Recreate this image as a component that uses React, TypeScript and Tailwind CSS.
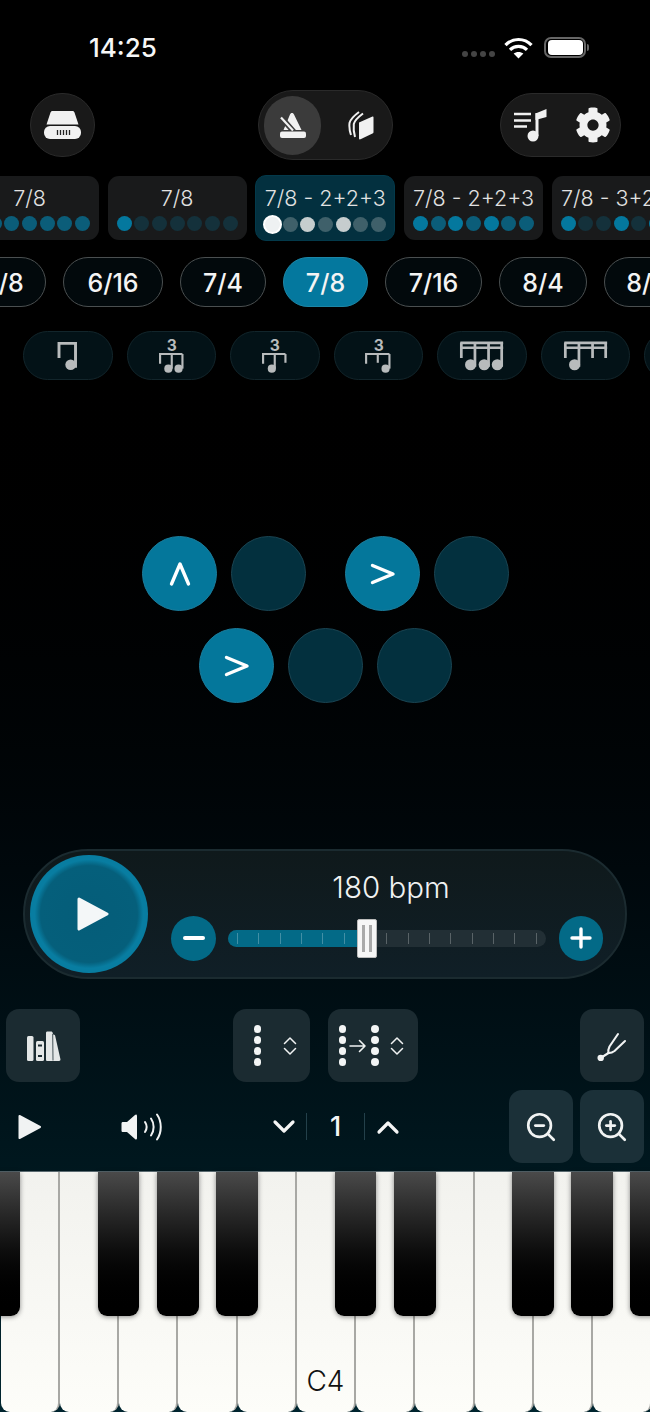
import React from "react";
import { ZoomIn, ZoomOut } from "lucide-react";
import { FaCog } from "react-icons/fa";

const bright = "bg-[#04789e]";
const mid = "bg-[#0b5d79]";
const dark = "bg-[#14313b]";

const cards = [
  { label: "7/8", dots: [mid, mid, mid, mid, mid, mid, mid] },
  { label: "7/8", dots: [bright, dark, dark, dark, dark, dark, dark] },
  { label: "7/8 - 2+2+3", active: true, dots: [] },
  { label: "7/8 - 2+2+3", dots: [bright, mid, bright, mid, bright, mid, mid] },
  { label: "7/8 - 3+2+2", dots: [bright, dark, dark, bright, dark, bright, dark] },
];

const meters = [
  { label: "6/8", w: "w-[85px]" },
  { label: "6/16", w: "w-[100px]" },
  { label: "7/4", w: "w-[86px]" },
  { label: "7/8", w: "w-[85px]", active: true },
  { label: "7/16", w: "w-[97px]" },
  { label: "8/4", w: "w-[88px]" },
  { label: "8/8", w: "w-[85px]" },
];

function NoteSvg({ children }: { children: React.ReactNode }) {
  return (
    <svg width="90" height="49" viewBox="0 0 90 49" fill="#b8bbbc" stroke="#b8bbbc">
      {children}
    </svg>
  );
}

function Triplet({ left, stems, heads, right }: { left: number; right: number; stems: [number, number][]; heads: number[] }) {
  return (
    <NoteSvg>
      <text x="45" y="20" textAnchor="middle" fontFamily="Inter, sans-serif" fontSize="16" fontWeight="700" stroke="none">3</text>
      <path d={`M${left} 33V23H${right}`} fill="none" strokeWidth="2.2" />
      {stems.map(([x, y]) => (
        <path key={x} d={`M${x} 23V${y}`} fill="none" strokeWidth="2.2" />
      ))}
      {heads.map((x) => (
        <circle key={x} cx={x} cy="38" r="4.2" stroke="none" />
      ))}
    </NoteSvg>
  );
}

const noteIcons = [
  <NoteSvg key="a">
    <path d="M36 27V12H53V37" fill="none" strokeWidth="3" />
    <circle cx="48" cy="34" r="5.5" stroke="none" />
  </NoteSvg>,
  <Triplet key="b" left={33} right={56} stems={[[45, 38], [56, 38]]} heads={[41.5, 52]} />,
  <Triplet key="c" left={33} right={56} stems={[[45, 38], [56, 32]]} heads={[42]} />,
  <Triplet key="d" left={32} right={56} stems={[[44, 32], [56, 38]]} heads={[52]} />,
  <NoteSvg key="e">
    <path d="M23 11.5H67M23 16.5H67" fill="none" strokeWidth="2.6" />
    <path d="M24 11V27M38 11V36M52 11V36M65.5 11V36" fill="none" strokeWidth="2.8" />
    <circle cx="33.5" cy="34" r="5.7" stroke="none" />
    <circle cx="47.5" cy="34" r="5.7" stroke="none" />
    <circle cx="61" cy="34" r="5.7" stroke="none" />
  </NoteSvg>,
  <NoteSvg key="f">
    <path d="M23 11.5H67M23 16.5H67" fill="none" strokeWidth="2.6" />
    <path d="M24 11V27M38 11V36M52 11V27M65.5 11V27" fill="none" strokeWidth="2.8" />
    <circle cx="33.5" cy="34" r="5.7" stroke="none" />
  </NoteSvg>,
];

function Beat({ accent }: { accent?: "up" | "right" }) {
  return (
    <div
      className={`flex h-[75px] w-[75px] items-center justify-center rounded-full border ${
        accent ? "border-[#1b7d9c] bg-[#04779b]" : "border-[#1a4452] bg-[#03303e]"
      }`}
    >
      {accent === "up" && (
        <svg width="22" height="26" viewBox="0 0 22 26" fill="none" stroke="#fff" strokeWidth="3.4" strokeLinecap="round" strokeLinejoin="round">
          <path d="M2.5 23L11 3L19.5 23" />
        </svg>
      )}
      {accent === "right" && (
        <svg width="26" height="22" viewBox="0 0 26 22" fill="none" stroke="#fff" strokeWidth="3.4" strokeLinecap="round" strokeLinejoin="round">
          <path d="M2.5 2.5L23 11L2.5 19.5" />
        </svg>
      )}
    </div>
  );
}

function UpDown() {
  return (
    <svg width="14" height="18" viewBox="0 0 14 18" fill="none" stroke="#f1f3f3" strokeWidth="1.5" strokeLinecap="round" strokeLinejoin="round">
      <path d="M1.5 6.5L7 1L12.5 6.5M1.5 11.5L7 17L12.5 11.5" />
    </svg>
  );
}

function DotColumn() {
  return (
    <div className="flex flex-col gap-[3.6px]">
      <div className="h-[7.4px] w-[7.4px] rounded-full bg-[#f3f5f5]" />
      <div className="h-[7.4px] w-[7.4px] rounded-full bg-[#f3f5f5]" />
      <div className="h-[7.4px] w-[7.4px] rounded-full bg-[#f3f5f5]" />
      <div className="h-[7.4px] w-[7.4px] rounded-full bg-[#f3f5f5]" />
    </div>
  );
}

const whiteKeys = Array.from({ length: 11 }, (_, i) => i);
const blackKeys = [-21.5, 97.5, 157, 216.3, 334.6, 394, 512, 571, 630.3];

export default function App() {
  return (
    <div className="flex h-[1412px] w-[650px] flex-col overflow-hidden bg-gradient-to-b from-[#000000] from-[22%] to-[#00252f] font-['Inter',sans-serif] text-white">
      {/* status bar */}
      <div className="relative flex h-[90px] shrink-0 items-start pt-[33px]">
        <span className="ml-[89px] text-[26px] font-medium leading-[30px] text-[#f7f7f7]">14:25</span>
        <div className="ml-auto mr-[61px] mt-[4px] flex items-start">
          <div className="mr-[9px] mt-[14px] flex gap-[3px]">
            <div className="h-[6px] w-[6px] rounded-full bg-[#444]" />
            <div className="h-[6px] w-[6px] rounded-full bg-[#444]" />
            <div className="h-[6px] w-[6px] rounded-full bg-[#444]" />
            <div className="h-[6px] w-[6px] rounded-full bg-[#444]" />
          </div>
          <svg width="29" height="22" viewBox="0 0 29 22" fill="none" stroke="#fff" strokeWidth="3.2">
            <path d="M1.5 8.2C8.5 0.6 20.5 0.6 27.5 8.2" />
            <path d="M6 12.8C10.5 8.2 18.5 8.2 23 12.8" />
            <path d="M14.5 21.5L9.6 16.6C12.2 14.3 16.8 14.3 19.4 16.6Z" fill="#fff" stroke="none" />
          </svg>
          <div className="ml-[11px] flex h-[21px] w-[42px] items-center justify-center rounded-[7px] border-2 border-[#666]">
            <div className="h-[15px] w-[35px] rounded-[4px] bg-white" />
          </div>
          <div className="ml-[1px] mt-[7px] h-[7px] w-[2px] rounded-r-sm bg-[#666]" />
        </div>
      </div>

      {/* header */}
      <div className="flex h-[70px] shrink-0 items-center">
        <div className="ml-[30px] flex h-[64px] w-[65px] items-center justify-center rounded-full border border-[#2a2a2a] bg-[#191919]">
          <svg width="37" height="28" viewBox="0 0 37 28" fill="#f1f1f1">
            <path d="M6.5 1.5C6.8 0.6 7.5 0 8.5 0H28.5C29.5 0 30.2 0.6 30.5 1.5L34.5 13.5H2.5Z" />
            <rect x="0" y="15" width="37" height="13" rx="6" />
            <path d="M13.5 19V24M16.5 19V24M19.5 19V24M22.5 19V24M25.5 19V24" stroke="#222" strokeWidth="1.3" />
          </svg>
        </div>
        <div className="ml-[163px] flex h-[70px] w-[135px] items-center rounded-full border border-[#2a2a2a] bg-[#191919] pl-[5px]">
          <div className="flex h-[59px] w-[57px] items-center justify-center rounded-full bg-[#3b3b3b]">
            <svg width="26" height="25" viewBox="0 0 26 25" fill="#f1f1f1">
              <path d="M10 1.5C10.3 0.6 11 0 12 0C13 0 13.7 0.6 14 1.5L21.5 17H3.5Z" />
              <path d="M0 3L14 19" stroke="#3b3b3b" strokeWidth="5.5" />
              <path d="M1 4.5L13 17.5" stroke="#f1f1f1" strokeWidth="2.2" />
              <rect x="0" y="18.5" width="26" height="6.5" rx="2" />
            </svg>
          </div>
          <div className="ml-[27px] flex items-center">
            <svg width="26" height="29" viewBox="0 0 26 29" fill="none" stroke="#f1f1f1" strokeWidth="2">
              <path d="M3 24C1.5 20 1 17 1.5 12C2 9.5 5 5.5 11 1" />
              <path d="M7 26C5.8 22 5.3 18 5.8 13C6.3 10.5 9 7 15 2.5" />
              <path d="M11 11.5L24.5 5.5C25.2 5.2 25.5 5.6 25.5 6.3V21C25.5 21.8 25.2 22.2 24.5 22.6L12.5 28.3C11.7 28.7 11 28.3 11 27.5Z" fill="#f1f1f1" stroke="none" />
            </svg>
          </div>
        </div>
        <div className="ml-[107px] flex h-[64px] w-[121px] items-center rounded-full border border-[#2a2a2a] bg-[#191919] pl-[12px]">
          <svg width="35" height="34" viewBox="0 0 35 34" fill="none">
            <path d="M1 6H18M1 12.5H18M1 18.5H14" stroke="#f1f1f1" strokeWidth="2.4" />
            <circle cx="20" cy="28" r="5.5" fill="#f1f1f1" />
            <path d="M24 28V5" stroke="#f1f1f1" strokeWidth="3" />
            <path d="M22.5 5.5L33.5 1V9L22.5 12Z" fill="#f1f1f1" />
          </svg>
          <FaCog size={36} color="#f1f1f1" className="ml-[27px]" />
        </div>
      </div>

      {/* time signature presets */}
      <div className="ml-[-40px] mt-[15px] flex h-[66px] shrink-0 items-center gap-[8.7px]">
        {cards.map((card, i) => (
          <div
            key={i}
            className={`flex shrink-0 flex-col items-center rounded-[11px] ${
              card.active
                ? "h-[66px] w-[140px] border border-[#03394a] bg-[#03303f] pt-[7px]"
                : "h-[64px] w-[139px] bg-[#191a1b] pt-[7px]"
            }`}
          >
            <span className="whitespace-nowrap text-[21.5px] font-light leading-[30px] text-[#e2e2e2]">{card.label}</span>
            {card.active ? (
              <div className="mt-[2px] flex h-[19px] items-center gap-[2.7px]">
                <div className="mx-[-2px] h-[19px] w-[19px] shrink-0 rounded-full border-2 border-white bg-[#eef1f2]" />
                <div className="h-[15px] w-[15px] rounded-full bg-[#3f606a]" />
                <div className="h-[15px] w-[15px] rounded-full bg-[#c6cdce]" />
                <div className="h-[15px] w-[15px] rounded-full bg-[#3f606a]" />
                <div className="h-[15px] w-[15px] rounded-full bg-[#c6cdce]" />
                <div className="h-[15px] w-[15px] rounded-full bg-[#3f606a]" />
                <div className="h-[15px] w-[15px] rounded-full bg-[#3f606a]" />
              </div>
            ) : (
              <div className="mt-[3px] flex gap-[2.7px]">
                {card.dots.map((d, j) => (
                  <div key={j} className={`h-[15px] w-[15px] rounded-full ${d}`} />
                ))}
              </div>
            )}
          </div>
        ))}
      </div>

      {/* meters */}
      <div className="ml-[-39px] mt-[16px] flex shrink-0 gap-[17px]">
        {meters.map((m) => (
          <div
            key={m.label}
            className={`flex h-[50px] shrink-0 items-center justify-center rounded-full border pt-[3px] ${m.w} ${
              m.active ? "border-[#1d86a6] bg-[#04789e]" : "border-[#4a4f50] bg-[#02090c]"
            }`}
          >
            <span className="text-[25px] font-medium text-[#f4f4f4]">{m.label}</span>
          </div>
        ))}
      </div>

      {/* subdivisions */}
      <div className="ml-[23px] mt-[24px] flex shrink-0 gap-[14px]">
        {noteIcons.map((icon, i) => (
          <div key={i} className="flex h-[49px] w-[89.5px] shrink-0 items-center justify-center rounded-full border border-[#12252b] bg-[#031217]">
            {icon}
          </div>
        ))}
        <div className="h-[49px] w-[89px] shrink-0 rounded-full border border-[#12252b] bg-[#031217]" />
      </div>

      {/* beats */}
      <div className="ml-[142px] mt-[156px] flex shrink-0 gap-[14px]">
        <Beat accent="up" />
        <Beat />
        <div className="w-[11px]" />
        <Beat accent="right" />
        <Beat />
      </div>
      <div className="ml-[199px] mt-[17px] flex shrink-0 gap-[14px]">
        <Beat accent="right" />
        <Beat />
        <Beat />
      </div>

      {/* transport */}
      <div className="relative ml-[23px] mt-[146px] flex h-[130px] w-[604px] shrink-0 items-center rounded-full border-2 border-[#1b2b30] bg-gradient-to-b from-[#0f191b] to-[#101f27] pl-[5px]">
        <div className="flex h-[118px] w-[118px] shrink-0 items-center justify-center rounded-full bg-[radial-gradient(closest-side,#055d79_0%,#055f7b_82%,#087da1_92%,#087da1_100%)] pl-[7px]">
          <svg width="32" height="34" viewBox="0 0 32 34" fill="#f4f7f8" stroke="#f4f7f8" strokeWidth="3" strokeLinejoin="round">
            <path d="M2 2L30 17L2 32Z" />
          </svg>
        </div>
        <div className="ml-[23px] flex w-[432px] flex-col items-center pt-[1px]">
          <span className="ml-[8px] text-[29.5px] font-light leading-[36px] text-[#f0f2f2]">180 bpm</span>
          <div className="mt-[11px] flex w-full items-center">
            <div className="flex h-[45px] w-[45px] shrink-0 items-center justify-center rounded-full bg-[#036a87]">
              <div className="h-[3.5px] w-[22px] rounded-full bg-white" />
            </div>
            <div className="relative ml-[12px] h-[17px] w-[318px] rounded-full bg-[#222f35]">
              <div className="absolute inset-y-0 left-0 w-[135px] rounded-l-full bg-[#036a87]" />
              <div className="absolute inset-y-[3px] left-0 right-0 flex justify-between px-[9px]">
                {Array.from({ length: 15 }, (_, i) => (
                  <div key={i} className="w-px bg-[#ffffff]/25" />
                ))}
              </div>
              <div className="absolute left-[129px] top-[-11px] flex h-[39px] w-[20px] items-center justify-center gap-[4px] rounded-[2px] border border-[#bbb] bg-[#f6f6f6]">
                <div className="h-[27px] w-[3px] bg-[#a9a9a9]" />
                <div className="h-[27px] w-[3px] bg-[#a9a9a9]" />
              </div>
            </div>
            <div className="ml-[13px] flex h-[45px] w-[44px] shrink-0 items-center justify-center rounded-full bg-[#036a87]">
              <svg width="22" height="22" viewBox="0 0 22 22" stroke="#fff" strokeWidth="3.4" strokeLinecap="round">
                <path d="M11 2V20M2 11H20" />
              </svg>
            </div>
          </div>
        </div>
      </div>

      {/* tools */}
      <div className="mt-[30px] flex h-[73px] shrink-0">
        <div className="ml-[6px] flex h-full w-[74px] items-center justify-center rounded-[13px] bg-[#1b2b31]">
          <svg width="35" height="30" viewBox="0 0 35 30" fill="#e4e7e7">
            <rect x="1" y="5" width="6.5" height="25" rx="1.5" />
            <rect x="10" y="10" width="8" height="20" rx="1.5" />
            <path d="M12 14.5H16M12 25H16" stroke="#1b2b31" strokeWidth="2" />
            <path d="M20 2C20 1 20.5 0.5 21.5 0.5H25C26 0.5 26.5 1 26.7 2L27 3.5C28.5 3.5 29 4 29.2 5L34.4 28C34.7 29.3 34 30 33 30H21.5C20.5 30 20 29.5 20 28.5Z" />
            <path d="M26.7 3L27 29.5" stroke="#1b2b31" strokeWidth="0.8" />
          </svg>
        </div>
        <div className="ml-[153px] flex h-full w-[77px] items-center rounded-[13px] bg-[#1b2b31] pl-[21px]">
          <DotColumn />
          <div className="ml-[22px]">
            <UpDown />
          </div>
        </div>
        <div className="ml-[18px] flex h-full w-[90px] items-center rounded-[13px] bg-[#1b2b31] pl-[11px]">
          <DotColumn />
          <svg width="18" height="14" viewBox="0 0 18 14" fill="none" stroke="#f1f3f3" strokeWidth="1.6" strokeLinecap="round" strokeLinejoin="round" className="ml-[3px]">
            <path d="M1 7H16M10.5 1.5L16 7L10.5 12.5" />
          </svg>
          <div className="ml-[4px]">
            <DotColumn />
          </div>
          <div className="ml-[11px]">
            <UpDown />
          </div>
        </div>
        <div className="ml-auto mr-[6px] flex h-full w-[64px] items-center justify-center rounded-[13px] bg-[#1b2b31]">
          <svg width="30" height="30" viewBox="0 0 30 30" fill="none" stroke="#f1f3f3" strokeWidth="2.1" strokeLinecap="round" strokeLinejoin="round">
            <path d="M21 3L12.5 15.5C11.5 17.5 11 20 11.5 22" />
            <path d="M28 10L17.5 20C15.5 21.5 13.5 22.2 11.5 22" />
            <path d="M11.5 22L3.7 27" />
            <circle cx="3.7" cy="27" r="2.2" fill="#f1f3f3" />
          </svg>
        </div>
      </div>

      {/* keyboard controls */}
      <div className="mt-[8px] flex h-[73px] shrink-0 items-center">
        <svg width="24" height="26" viewBox="0 0 24 26" fill="#f1f3f3" stroke="#f1f3f3" strokeWidth="2" strokeLinejoin="round" className="ml-[18px]">
          <path d="M1.5 2L22 13L1.5 24Z" />
        </svg>
        <svg width="41" height="28" viewBox="0 0 41 28" fill="none" className="ml-[79px]">
          <path d="M0.5 10.5C0.5 9.5 1 9 2 9H6L14 2C15 1 16 1.5 16 3V25C16 26.5 15 27 14 26L6 19H2C1 19 0.5 18.5 0.5 17.5Z" fill="#f1f3f3" />
          <path d="M24 9C26 12 26 16 24 19M30 5.5C33.5 10.5 33.5 17.5 30 22.5M36 1.5C41 8.5 41 19.5 36 26.5" stroke="#f1f3f3" strokeWidth="2" strokeLinecap="round" />
        </svg>
        <svg width="24" height="16" viewBox="0 0 24 16" fill="none" stroke="#f4f5f5" strokeWidth="3.2" strokeLinecap="round" strokeLinejoin="round" className="ml-[110px]">
          <path d="M3 3L12 12L21 3" />
        </svg>
        <div className="ml-[10px] h-[27px] w-px bg-[#23404a]" />
        <span className="w-[57px] text-center text-[27px] font-medium leading-none text-[#f4f5f5]">1</span>
        <div className="h-[27px] w-px bg-[#23404a]" />
        <svg width="24" height="16" viewBox="0 0 24 16" fill="none" stroke="#f4f5f5" strokeWidth="3.2" strokeLinecap="round" strokeLinejoin="round" className="ml-[11px]">
          <path d="M3 13L12 4L21 13" />
        </svg>
        <div className="ml-auto flex gap-[7px] pr-[6px]">
          <div className="flex h-[73px] w-[64px] items-center justify-center rounded-[13px] bg-[#1b3038]">
            <ZoomOut size={34} color="#f1f3f3" strokeWidth={1.9} />
          </div>
          <div className="flex h-[73px] w-[64px] items-center justify-center rounded-[13px] bg-[#1b3038]">
            <ZoomIn size={34} color="#f1f3f3" strokeWidth={1.9} />
          </div>
        </div>
      </div>

      {/* piano */}
      <div className="relative mt-[8px] flex h-[241px] shrink-0 border-t border-[#5a6a70] pl-[0.5px]">
        {whiteKeys.map((i) => (
          <div
            key={i}
            className="relative h-full w-[59.25px] shrink-0 rounded-b-[9px] border-r-2 border-[#a8a8a4] bg-gradient-to-b from-[#f2f2ee] to-[#fdfdf9]"
          >
            {i === 5 && (
              <span className="absolute bottom-[17px] left-0 right-0 text-center text-[28px] font-light leading-none text-[#111]">C4</span>
            )}
          </div>
        ))}
        {blackKeys.map((left) => (
          <div
            key={left}
            className="absolute top-0 h-[144px] w-[41.5px] rounded-b-[9px] bg-gradient-to-b from-[#4a4a4a] via-[#0d0d0d] via-[55%] to-[#000000] shadow-[0_1px_5px_rgba(0,0,0,0.45)]"
            style={{ left }}
          />
        ))}
      </div>
    </div>
  );
}
